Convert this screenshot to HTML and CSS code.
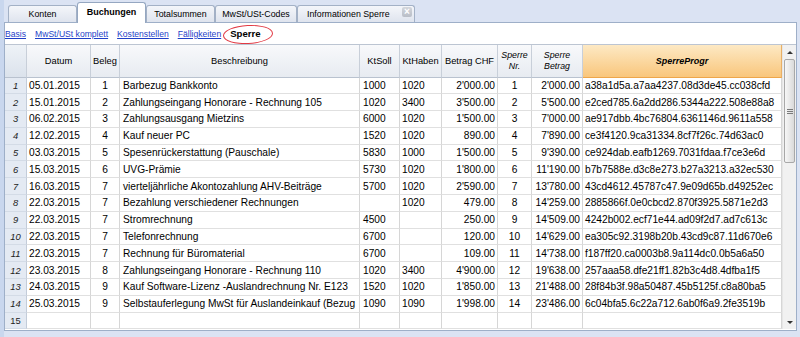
FILE: index.html
```html
<!DOCTYPE html>
<html lang="de">
<head>
<meta charset="utf-8">
<title>Buchungen – Sperre</title>
<link rel="stylesheet" href="styles.css">
</head>
<body>
<div class="app">
  <div class="tabbar">
    <div class="tab">Konten</div>
    <div class="tab active">Buchungen</div>
    <div class="tab">Totalsummen</div>
    <div class="tab wide">MwSt/USt-Codes</div>
    <div class="tab info"><span>Informationen Sperre</span><span class="close">×</span></div>
  </div>
  <div class="panel">
    <div class="views">
      <a href="#">Basis</a>
      <a href="#">MwSt/USt komplett</a>
      <a href="#">Kostenstellen</a>
      <a href="#">Fälligkeiten</a>
      <span class="current">Sperre<span class="ring"></span></span>
    </div>
    <div class="gridwrap">
      <div class="grid">
        <div class="row head">
          <div class="c n"></div>
          <div class="c d">Datum</div>
          <div class="c b">Beleg</div>
          <div class="c t">Beschreibung</div>
          <div class="c s">KtSoll</div>
          <div class="c h">KtHaben</div>
          <div class="c a">Betrag CHF</div>
          <div class="c sn it">Sperre<br>Nr.</div>
          <div class="c sb it">Sperre<br>Betrag</div>
          <div class="c p sel">SperreProgr</div>
        </div>
        <div class="row"><div class="c n">1</div><div class="c d">05.01.2015</div><div class="c b">1</div><div class="c t">Barbezug Bankkonto</div><div class="c s">1000</div><div class="c h">1020</div><div class="c a">2'000.00</div><div class="c sn">1</div><div class="c sb">2'000.00</div><div class="c p">a38a1d5a.a7aa4237.08d3de45.cc038cfd</div></div>
        <div class="row"><div class="c n">2</div><div class="c d">15.01.2015</div><div class="c b">2</div><div class="c t">Zahlungseingang Honorare - Rechnung 105</div><div class="c s">1020</div><div class="c h">3400</div><div class="c a">3'500.00</div><div class="c sn">2</div><div class="c sb">5'500.00</div><div class="c p">e2ced785.6a2dd286.5344a222.508e88a8</div></div>
        <div class="row"><div class="c n">3</div><div class="c d">06.02.2015</div><div class="c b">3</div><div class="c t">Zahlungsausgang Mietzins</div><div class="c s">6000</div><div class="c h">1020</div><div class="c a">1'500.00</div><div class="c sn">3</div><div class="c sb">7'000.00</div><div class="c p">ae917dbb.4bc76804.6361146d.9611a558</div></div>
        <div class="row"><div class="c n">4</div><div class="c d">12.02.2015</div><div class="c b">4</div><div class="c t">Kauf neuer PC</div><div class="c s">1520</div><div class="c h">1020</div><div class="c a">890.00</div><div class="c sn">4</div><div class="c sb">7'890.00</div><div class="c p">ce3f4120.9ca31334.8cf7f26c.74d63ac0</div></div>
        <div class="row"><div class="c n">5</div><div class="c d">03.03.2015</div><div class="c b">5</div><div class="c t">Spesenrückerstattung (Pauschale)</div><div class="c s">5830</div><div class="c h">1000</div><div class="c a">1'500.00</div><div class="c sn">5</div><div class="c sb">9'390.00</div><div class="c p">ce924dab.eafb1269.7031fdaa.f7ce3e6d</div></div>
        <div class="row"><div class="c n">6</div><div class="c d">15.03.2015</div><div class="c b">6</div><div class="c t">UVG-Prämie</div><div class="c s">5730</div><div class="c h">1020</div><div class="c a">1'800.00</div><div class="c sn">6</div><div class="c sb">11'190.00</div><div class="c p">b7b7588e.d3c8e273.b27a3213.a32ec530</div></div>
        <div class="row"><div class="c n">7</div><div class="c d">16.03.2015</div><div class="c b">7</div><div class="c t">vierteljährliche Akontozahlung AHV-Beiträge</div><div class="c s">5700</div><div class="c h">1020</div><div class="c a">2'590.00</div><div class="c sn">7</div><div class="c sb">13'780.00</div><div class="c p">43cd4612.45787c47.9e09d65b.d49252ec</div></div>
        <div class="row"><div class="c n">8</div><div class="c d">22.03.2015</div><div class="c b">7</div><div class="c t">Bezahlung verschiedener Rechnungen</div><div class="c s"></div><div class="c h">1020</div><div class="c a">479.00</div><div class="c sn">8</div><div class="c sb">14'259.00</div><div class="c p">2885866f.0e0cbcd2.870f3925.5871e2d3</div></div>
        <div class="row"><div class="c n">9</div><div class="c d">22.03.2015</div><div class="c b">7</div><div class="c t">Stromrechnung</div><div class="c s">4500</div><div class="c h"></div><div class="c a">250.00</div><div class="c sn">9</div><div class="c sb">14'509.00</div><div class="c p">4242b002.ecf71e44.ad09f2d7.ad7c613c</div></div>
        <div class="row"><div class="c n">10</div><div class="c d">22.03.2015</div><div class="c b">7</div><div class="c t">Telefonrechnung</div><div class="c s">6700</div><div class="c h"></div><div class="c a">120.00</div><div class="c sn">10</div><div class="c sb">14'629.00</div><div class="c p">ea305c92.3198b20b.43cd9c87.11d670e6</div></div>
        <div class="row"><div class="c n">11</div><div class="c d">22.03.2015</div><div class="c b">7</div><div class="c t">Rechnung für Büromaterial</div><div class="c s">6700</div><div class="c h"></div><div class="c a">109.00</div><div class="c sn">11</div><div class="c sb">14'738.00</div><div class="c p">f187ff20.ca0003b8.9a114dc0.0b5a6a50</div></div>
        <div class="row"><div class="c n">12</div><div class="c d">23.03.2015</div><div class="c b">8</div><div class="c t">Zahlungseingang Honorare - Rechnung 110</div><div class="c s">1020</div><div class="c h">3400</div><div class="c a">4'900.00</div><div class="c sn">12</div><div class="c sb">19'638.00</div><div class="c p">257aaa58.dfe21ff1.82b3c4d8.4dfba1f5</div></div>
        <div class="row"><div class="c n">13</div><div class="c d">24.03.2015</div><div class="c b">9</div><div class="c t">Kauf Software-Lizenz -Auslandrechnung Nr. E123</div><div class="c s">1520</div><div class="c h">1020</div><div class="c a">1'850.00</div><div class="c sn">13</div><div class="c sb">21'488.00</div><div class="c p">28f84b3f.98a50487.45b5125f.c8a80ba5</div></div>
        <div class="row"><div class="c n">14</div><div class="c d">25.03.2015</div><div class="c b">9</div><div class="c t">Selbstauferlegung MwSt für Auslandeinkauf (Bezug</div><div class="c s">1090</div><div class="c h">1090</div><div class="c a">1'998.00</div><div class="c sn">14</div><div class="c sb">23'486.00</div><div class="c p">6c04bfa5.6c22a712.6ab0f6a9.2fe3519b</div></div>
        <div class="row"><div class="c n new">15</div><div class="c d"></div><div class="c b"></div><div class="c t"></div><div class="c s"></div><div class="c h"></div><div class="c a"></div><div class="c sn"></div><div class="c sb"></div><div class="c p"></div></div>
      </div>
      <div class="vscroll">
        <div class="sbtn up"></div>
        <div class="thumb"><span class="grip"></span></div>
        <div class="track"></div>
        <div class="sbtn down"></div>
      </div>
    </div>
  </div>
</div>
</body>
</html>
```

FILE: styles.css
```css
* { box-sizing: border-box; }

html, body {
  margin: 0;
  padding: 0;
}

body {
  width: 800px;
  height: 337px;
  overflow: hidden;
  background: #dbe3f3;
  font-family: "Liberation Sans", Arial, sans-serif;
  color: #000;
}

.app {
  height: 337px;
  border-left: 4px solid #c9d7ee;
  padding-right: 3px;
}

/* ---------- tabs ---------- */
.tabbar {
  height: 23px;
  display: flex;
  align-items: flex-end;
  padding-left: 4px;
  border-bottom: 1px solid #9eafc8;
}

.tab {
  width: 69px;
  height: 17px;
  border: 1px solid #a3b1c6;
  border-bottom: none;
  border-radius: 3px 3px 0 0;
  background: linear-gradient(#f4f6fa, #dfe4ee);
  font-size: 8.8px;
  display: flex;
  align-items: center;
  justify-content: center;
  white-space: nowrap;
}

.tab.active {
  height: 21px;
  margin-bottom: -1px;
  background: #fff;
  border-color: #95a7c1;
  font-weight: bold;
  font-size: 9px;
  padding-bottom: 2px;
}

.tab.wide { width: 82px; }

.tab.info {
  width: 118px;
  justify-content: flex-start;
  padding-left: 9px;
}

.close {
  margin-left: auto;
  margin-right: 2px;
  align-self: flex-start;
  margin-top: 1px;
  width: 10px;
  height: 10px;
  border-radius: 2px;
  background: linear-gradient(#d3d6dc, #b9bec7);
  color: #fff;
  font-size: 10px;
  line-height: 10px;
  text-align: center;
  font-weight: bold;
}

/* ---------- panel ---------- */
.panel {
  height: 307.5px;
  background: #fff;
  border: 1px solid #9eafc8;
  border-top: none;
}

.views {
  height: 21px;
  display: flex;
  align-items: center;
  gap: 9px;
  font-size: 8.6px;
  white-space: nowrap;
}

.views a {
  color: #1f3fc8;
  text-decoration: underline;
}

.current {
  position: relative;
  font-weight: bold;
  font-size: 9.6px;
  line-height: 12px;
  margin-left: 0;
}

.ring {
  position: absolute;
  left: -7px;
  right: -13px;
  top: -3px;
  bottom: -4px;
  border: 1.5px solid #e23a44;
  border-radius: 50%;
  transform: rotate(-3deg);
}

/* ---------- grid ---------- */
.gridwrap {
  display: flex;
  border-top: 1px solid #bcc5d2;
}

.grid {
  width: 777px;
}

.row {
  display: grid;
  grid-template-columns: 22px 64px 29px 240px 40px 42px 56px 34px 51px 199px;
  height: 16.8px;
}

.c {
  display: flex;
  align-items: center;
  overflow: hidden;
  white-space: nowrap;
  border-right: 1px solid #d6d6d6;
  border-bottom: 1px solid #e0e0e0;
  font-size: 10.2px;
  padding: 0 2px;
}

.c.b, .c.sn { justify-content: center; }
.c.a, .c.sb { justify-content: flex-end; padding-right: 2px; }
.c.t { padding-left: 3px; }
.c.s { padding-left: 3px; }

.c.n {
  justify-content: center;
  background: #e4eaf3;
  border-right-color: #c3ccd9;
  border-bottom-color: #d3dbe6;
  font-style: italic;
  font-size: 9.4px;
  color: #222;
  padding: 0;
}

.c.n.new { font-style: normal; }

.row.head {
  height: 32.5px;
}

.row.head .c {
  justify-content: center;
  text-align: center;
  background: linear-gradient(#f8f9fb, #e7ebf1);
  border-right-color: #c8cfd9;
  border-bottom-color: #b9c2cf;
  font-size: 9.3px;
  padding: 0;
}

.row.head .c.n {
  background: linear-gradient(#eef2f7, #dbe2ec);
}

.row.head .c.it {
  font-style: italic;
  font-size: 8.8px;
  line-height: 10.5px;
}

.row.head .c.sel {
  background: linear-gradient(#fde9c4, #f9c67c);
  border-bottom-color: #eea64a;
  border-right-color: #e9b066;
  font-weight: bold;
  font-style: italic;
  font-size: 9px;
}

/* ---------- scrollbar ---------- */
.vscroll {
  width: 14px;
  display: flex;
  flex-direction: column;
  background: #f1f1f1;
  border-left: 1px solid #e6e6e6;
}

.sbtn {
  height: 14px;
  display: flex;
  align-items: center;
  justify-content: center;
}

.sbtn.up::before {
  content: "";
  border-left: 3px solid transparent;
  border-right: 3px solid transparent;
  border-bottom: 3px solid #333;
}

.sbtn.down::before {
  content: "";
  border-left: 3px solid transparent;
  border-right: 3px solid transparent;
  border-top: 3px solid #333;
}

.thumb {
  height: 104px;
  margin: 0 1px;
  border: 1px solid #a8a8a8;
  border-radius: 2px;
  background: linear-gradient(to right, #f7f7f7, #dadada);
  display: flex;
  align-items: center;
  justify-content: center;
}

.grip {
  width: 6px;
  height: 5px;
  background: repeating-linear-gradient(#7a7a7a 0 1px, transparent 1px 2px);
}

.track {
  flex: 1;
}
```
